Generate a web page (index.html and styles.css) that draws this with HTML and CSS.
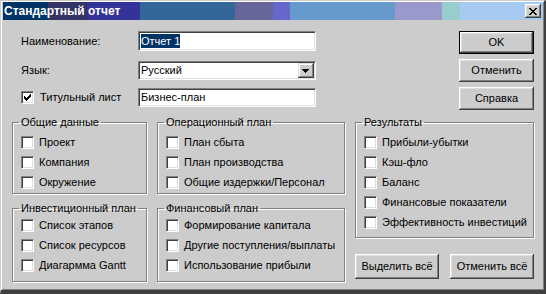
FILE: index.html
```html
<!DOCTYPE html>
<html lang="ru">
<head>
  <meta charset="UTF-8">
  <title>Стандартный отчет</title>
  <link rel="stylesheet" href="styles.css">
</head>
<body>
  <div class="window">
    <div class="titlebar">
      <span class="title">Стандартный отчет</span>
      <button class="close-btn" aria-label="Закрыть">
        <svg width="8" height="7" viewBox="0 0 8 7" shape-rendering="crispEdges">
          <path d="M0 0h2v1h-2z M6 0h2v1h-2z M1 1h2v1h-2z M5 1h2v1h-2z M2 2h4v1h-4z M3 3h2v1h-2z M2 4h4v1h-4z M1 5h2v1h-2z M5 5h2v1h-2z M0 6h2v1h-2z M6 6h2v1h-2z" fill="#000"/>
        </svg>
      </button>
    </div>

    <div class="dialog">
      <div class="top">
        <div class="form">
          <div class="form-row">
            <span class="form-label">Наименование:</span>
            <div class="edit"><span class="selected">Отчет 1</span></div>
          </div>
          <div class="form-row row-lang">
            <span class="form-label">Язык:</span>
            <div class="edit combo">
              <span>Русский</span>
              <span class="drop">
                <svg width="7" height="4" viewBox="0 0 7 4" shape-rendering="crispEdges">
                  <path d="M0 0h7v1h-7z M1 1h5v1h-5z M2 2h3v1h-3z M3 3h1v1h-1z" fill="#000"/>
                </svg>
              </span>
            </div>
          </div>
          <div class="form-row row-cover">
            <label class="check form-label">
              <span class="box">
                <svg width="7" height="7" viewBox="0 0 7 7" shape-rendering="crispEdges">
                  <path d="M6 0h1v3h-1z M5 1h1v3h-1z M4 2h1v3h-1z M0 2h1v3h-1z M1 3h1v3h-1z M2 4h1v3h-1z M3 3h1v3h-1z" fill="#000"/>
                </svg>
              </span>
              Титульный лист
            </label>
            <div class="edit">Бизнес-план</div>
          </div>
        </div>

        <div class="actions">
          <button class="btn btn-default">OK</button>
          <button class="btn">Отменить</button>
          <button class="btn">Справка</button>
        </div>
      </div>

      <div class="groups">
        <div class="col">
          <fieldset class="group group-first">
            <legend>Общие данные</legend>
            <label class="check"><span class="box"></span>Проект</label>
            <label class="check"><span class="box"></span>Компания</label>
            <label class="check"><span class="box"></span>Окружение</label>
          </fieldset>
          <fieldset class="group group-second">
            <legend>Инвестиционный план</legend>
            <label class="check"><span class="box"></span>Список этапов</label>
            <label class="check"><span class="box"></span>Список ресурсов</label>
            <label class="check"><span class="box"></span>Диагармма Gantt</label>
          </fieldset>
        </div>

        <div class="col">
          <fieldset class="group group-first">
            <legend>Операционный план</legend>
            <label class="check"><span class="box"></span>План сбыта</label>
            <label class="check"><span class="box"></span>План производства</label>
            <label class="check"><span class="box"></span>Общие издержки/Персонал</label>
          </fieldset>
          <fieldset class="group group-second">
            <legend>Финансовый план</legend>
            <label class="check"><span class="box"></span>Формирование капитала</label>
            <label class="check"><span class="box"></span>Другие поступления/выплаты</label>
            <label class="check"><span class="box"></span>Использование прибыли</label>
          </fieldset>
        </div>

        <div class="col col-results">
          <fieldset class="group group-results">
            <legend>Результаты</legend>
            <label class="check"><span class="box"></span>Прибыли-убытки</label>
            <label class="check"><span class="box"></span>Кэш-фло</label>
            <label class="check"><span class="box"></span>Баланс</label>
            <label class="check"><span class="box"></span>Финансовые показатели</label>
            <label class="check"><span class="box"></span>Эффективность инвестиций</label>
          </fieldset>
          <div class="select-buttons">
            <button class="btn btn-wide">Выделить всё</button>
            <button class="btn btn-wide">Отменить всё</button>
          </div>
        </div>
      </div>
    </div>
  </div>
</body>
</html>
```

FILE: styles.css
```css
* {
  box-sizing: border-box;
}
html, body {
  margin: 0;
}
body {
  background-color: #404040;
  font-family: "Liberation Sans", Arial, sans-serif;
  font-size: 11px;
  line-height: 13px;
  color: #000;
}
.window {
  width: 546px;
  height: 294px;
  background-color: #cccccc;
  border-style: solid;
  border-width: 1px 2px 4px 1px;
  border-color: #cccccc #404040 #404040 #cccccc;
  box-shadow: inset 1px 1px #fff, inset -1px -1px #808080;
  padding: 1px 1px 0 2px;
}

/* caption */
.titlebar {
  height: 18px;
  display: flex;
  align-items: center;
  justify-content: space-between;
  padding: 0 2px 0 1px;
  background: linear-gradient(to right,
    #003366 0 45px, #333366 45px 84px, #333399 84px 137px,
    #336699 137px 232px, #666699 232px 270px, #6666cc 270px 287px,
    #6699cc 287px 392px, #9999cc 392px 439px, #99cccc 439px 457px,
    #a6caf0 457px);
}
.title {
  color: #fff;
  font-weight: bold;
  font-size: 12px;
}
.close-btn {
  width: 16px;
  height: 14px;
  padding: 0 1px 0 0;
  border: none;
  background-color: #cccccc;
  box-shadow: inset -1px -1px #404040, inset 1px 1px #fff, inset -2px -2px #808080, inset 2px 2px #dfdfdf;
  display: flex;
  align-items: center;
  justify-content: center;
}

/* dialog body */
.dialog {
  padding: 11px 9px 0 9px;
}
.top {
  display: flex;
  justify-content: space-between;
  align-items: flex-start;
}
.form {
  margin-left: 9px;
  display: flex;
  flex-direction: column;
}
.form-row {
  display: flex;
  align-items: center;
}
.row-lang {
  margin-top: 10px;
}
.row-cover {
  margin-top: 7px;
}
.form-label {
  width: 117px;
}
.edit {
  width: 178px;
  height: 20px;
  background-color: #fff;
  border: 1px solid;
  border-color: #808080 #fff #fff #808080;
  box-shadow: inset 1px 1px #404040, inset -1px -1px #dfdfdf;
  padding-left: 2px;
  display: flex;
  align-items: center;
}
.row-lang .edit,
.row-cover .edit {
  height: 19px;
}
.selected {
  display: inline-block;
  line-height: 14px;
  background-color: #003366;
  color: #fff;
}
.combo {
  padding-right: 1px;
}
.drop {
  width: 16px;
  height: 15px;
  margin-left: auto;
  background-color: #cccccc;
  box-shadow: inset -1px -1px #404040, inset 1px 1px #dfdfdf, inset -2px -2px #808080, inset 2px 2px #fff;
  display: flex;
  align-items: center;
  justify-content: center;
  padding-right: 1px;
}

/* buttons */
.actions {
  display: flex;
  flex-direction: column;
  gap: 5px;
}
.btn {
  width: 75px;
  height: 23px;
  padding: 0;
  font: inherit;
  color: #000;
  background-color: #cccccc;
  border: none;
  box-shadow: inset -1px -1px #404040, inset 1px 1px #fff, inset -2px -2px #808080, inset 2px 2px #dfdfdf;
}
.btn-default {
  border: 1px solid #000;
}
.btn-wide {
  width: 84px;
  height: 25px;
}

/* checkboxes */
.check {
  display: flex;
  align-items: center;
  gap: 5px;
  height: 20px;
  white-space: nowrap;
}
.box {
  width: 13px;
  height: 13px;
  flex: none;
  background-color: #fff;
  border: 1px solid;
  border-color: #808080 #fff #fff #808080;
  box-shadow: inset 1px 1px #404040, inset -1px -1px #dfdfdf;
  display: flex;
  align-items: center;
  justify-content: center;
}
.row-cover .check {
  gap: 6px;
}

/* group boxes */
.groups {
  display: grid;
  grid-template-columns: 135px 188px 179px;
  column-gap: 10px;
  margin-top: 6px;
}
.col {
  display: flex;
  flex-direction: column;
  gap: 8px;
}
.col-results {
  gap: 16px;
}
.group {
  margin: 0;
  min-width: 0;
  border: 1px solid #808080;
  box-shadow: inset 1px 1px #fff, 1px 1px #fff;
  padding: 3px 8px 1px 8px;
}
.group legend {
  padding: 0 2px;
  margin-left: -2px;
  line-height: 13px;
}
.group-second {
  padding-top: 0;
  padding-bottom: 6px;
}
.group-results {
  padding-bottom: 5px;
}
.select-buttons {
  display: flex;
  justify-content: space-between;
}
```
